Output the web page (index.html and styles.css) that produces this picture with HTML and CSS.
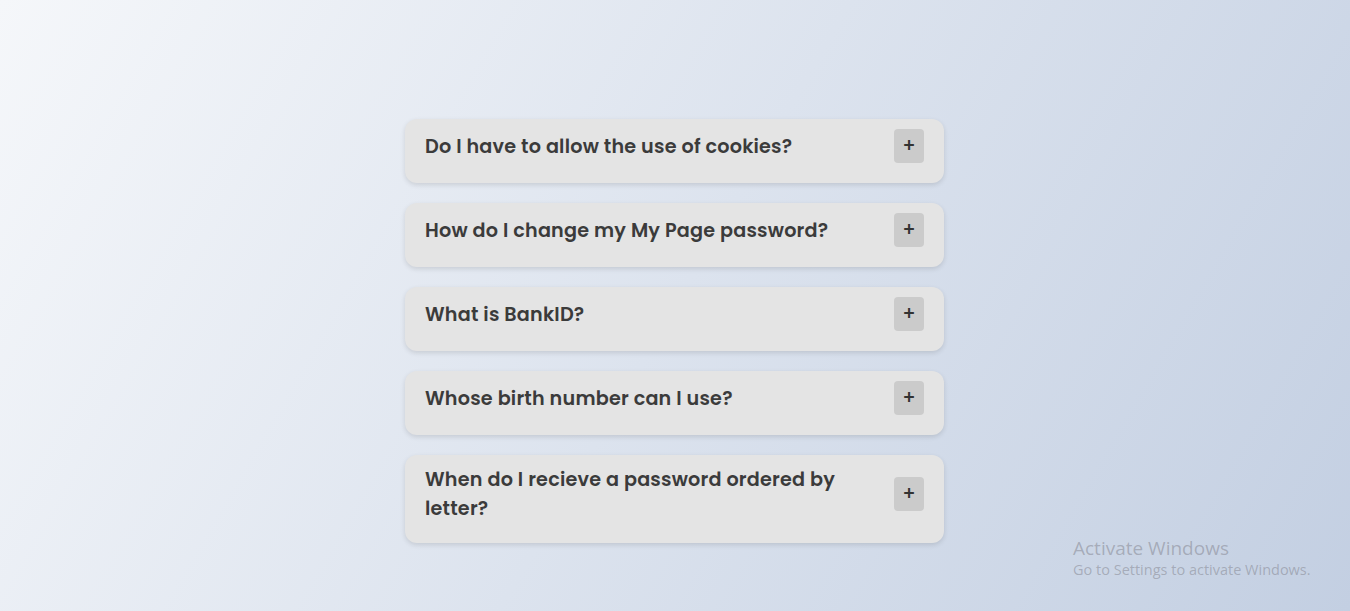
FILE: index.html
```html
<!DOCTYPE html>
<html lang="en">
<head>
<meta charset="utf-8">
<title>FAQ</title>
<link rel="stylesheet" href="styles.css">
</head>
<body>
<main class="faq">
  <div class="item"><div class="head"><span class="q">Do I have to allow the use of cookies?</span><button class="toggle">+</button></div></div>
  <div class="item"><div class="head"><span class="q">How do I change my My Page password?</span><button class="toggle">+</button></div></div>
  <div class="item"><div class="head"><span class="q">What is BankID?</span><button class="toggle">+</button></div></div>
  <div class="item"><div class="head"><span class="q">Whose birth number can I use?</span><button class="toggle">+</button></div></div>
  <div class="item"><div class="head"><span class="q">When do I recieve a password ordered by letter?</span><button class="toggle">+</button></div></div>
</main>
<div class="watermark">
  <div class="wm-title">Activate Windows</div>
  <div class="wm-sub">Go to Settings to activate Windows.</div>
</div>
</body>
</html>
```
FILE: styles.css
```css
* { box-sizing: border-box; }
html, body { height: 100%; }
body {
  margin: 0;
  min-height: 611px;
  background: linear-gradient(120deg, #f5f7fa 0%, #c3cfe2 100%);
  font-family: "Poppins", "Inter", "DejaVu Sans", sans-serif;
  overflow: hidden;
}
.faq {
  width: 539px;
  margin-left: calc(50% - 270px);
  padding-top: 119px;
  display: flex;
  flex-direction: column;
  gap: 20px;
}
.item {
  background: #e4e4e4;
  border-radius: 12px;
  padding: 10px 20px 20px;
  box-shadow: 0 2px 5px rgba(0,0,0,0.12);
}
.head {
  display: flex;
  align-items: center;
  justify-content: space-between;
  min-height: 34px;
}
.q {
  font-size: 19.2px;
  font-weight: 600;
  letter-spacing: 0.2px;
  line-height: 29px;
  color: #3b3b3b;
  max-width: 430px;
}
.toggle {
  width: 30px;
  height: 34px;
  border: none;
  border-radius: 4px;
  background: #cbcbcb;
  color: #333;
  font-family: "Poppins", "DejaVu Sans", sans-serif;
  font-size: 19px;
  font-weight: 500;
  padding: 0;
  line-height: 34px;
  flex-shrink: 0;
}
.watermark {
  position: absolute;
  left: 1073px;
  top: 536px;
  color: rgba(120,120,130,0.45);
  font-family: "Open Sans", "Liberation Sans", sans-serif;
}
.wm-title { font-size: 19px; line-height: 24px; }
.wm-sub { font-size: 14.5px; line-height: 20px; }
```
